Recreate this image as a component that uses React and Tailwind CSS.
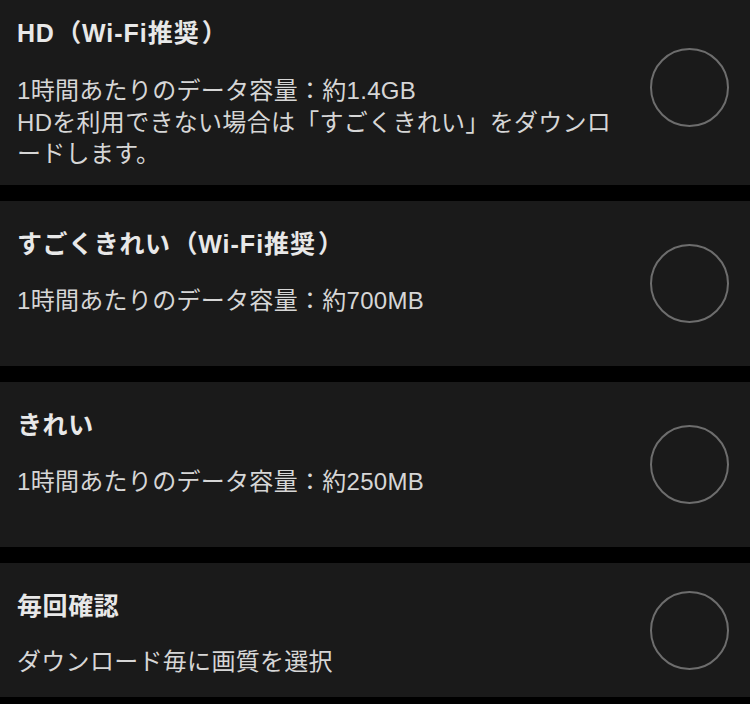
const font = { fontFamily: '"Liberation Sans", "Noto Sans CJK JP", sans-serif' };

function Radio({ className = "" }) {
  return (
    <div
      className={`w-[79px] h-[79px] shrink-0 rounded-full border-2 border-[#6d6d6d] ${className}`}
    />
  );
}

function Title({ name, note }) {
  return (
    <div className="text-[25px] leading-[32px] font-bold tracking-[0.6px] text-[#e8e8e8] whitespace-nowrap">
      {name}
      {note && (
        <>
          <span className="ml-[2px]">（</span>
          <span className="tracking-[1px]">{note}</span>
          <span className="ml-[2px]">）</span>
        </>
      )}
    </div>
  );
}

function Option({ name, note, lines, height, pt, gap, circleClass }) {
  return (
    <div
      className="flex items-center justify-between bg-[#1a1a1a] pl-[17px] pr-[21px]"
      style={{ height }}
    >
      <div className="self-start flex flex-col" style={{ paddingTop: pt }}>
        <Title name={name} note={note} />
        <div style={{ marginTop: gap }}>
          {lines.map((l, i) => (
            <div
              key={i}
              className="text-[24px] leading-[31.5px] tracking-[0.3px] text-[#d6d6d6] whitespace-nowrap"
            >
              {l}
            </div>
          ))}
        </div>
      </div>
      <Radio className={circleClass} />
    </div>
  );
}

export default function App() {
  return (
    <div className="w-[750px] h-[704px] bg-black overflow-hidden flex flex-col gap-[16px]" style={font}>
      <Option
        name="HD"
        note="Wi-Fi推奨"
        lines={[
          "1時間あたりのデータ容量：約1.4GB",
          "HDを利用できない場合は「すごくきれい」をダウンロ",
          "ードします。",
        ]}
        height={185}
        pt={17}
        gap={26}
        circleClass="mb-[11px]"
      />
      <Option
        name="すごくきれい"
        note="Wi-Fi推奨"
        lines={["1時間あたりのデータ容量：約700MB"]}
        height={165}
        pt={27}
        gap={25}
      />
      <Option
        name="きれい"
        lines={["1時間あたりのデータ容量：約250MB"]}
        height={165}
        pt={27}
        gap={25}
      />
      <Option
        name="毎回確認"
        lines={["ダウンロード毎に画質を選択"]}
        height={134}
        pt={27}
        gap={24}
      />
    </div>
  );
}
